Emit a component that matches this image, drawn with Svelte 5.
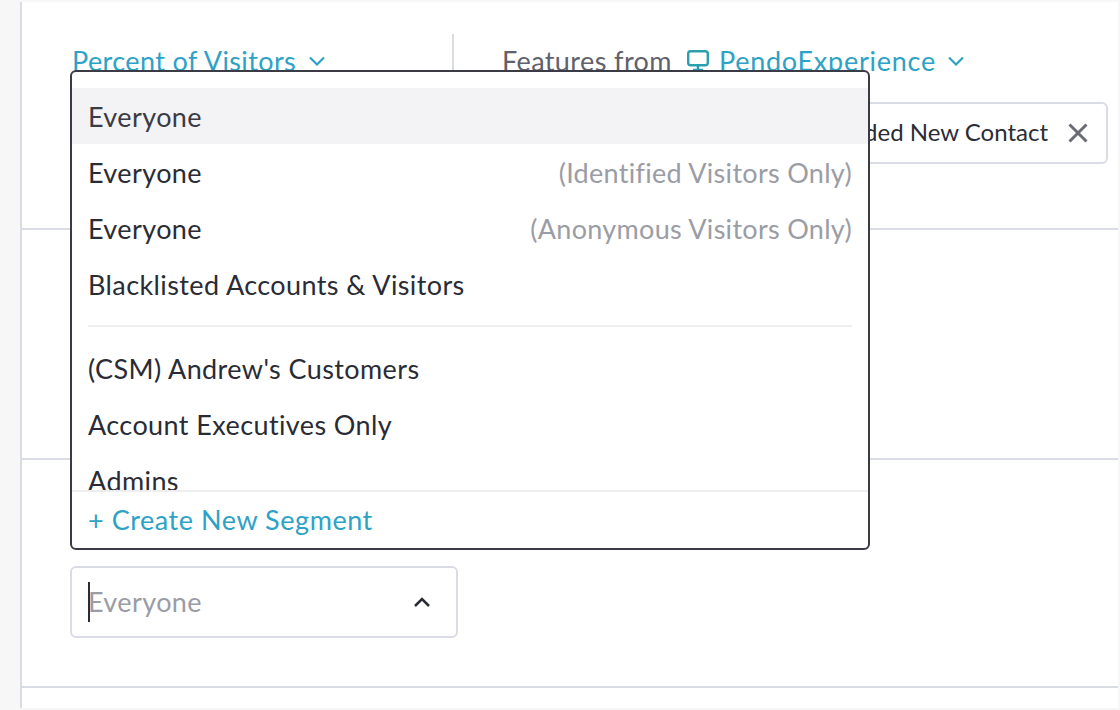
<script>
    const topItems = [
        { label: "Everyone", note: "", active: true },
        { label: "Everyone", note: "(Identified Visitors Only)" },
        { label: "Everyone", note: "(Anonymous Visitors Only)" },
        { label: "Blacklisted Accounts & Visitors", note: "" },
    ];
    const segments = ["(CSM) Andrew's Customers", "Account Executives Only", "Admins"];
</script>

<div class="page">
    <div class="card">
        <section class="row first">
            <div class="metric">
                <span class="link">Percent of Visitors</span>
                <svg class="chev" width="16" height="10" viewBox="0 0 16 10"><path d="M1 1.5l7 7 7-7" /></svg>
            </div>
            <div class="features">
                <div class="source">
                    <span class="muted">Features from</span>
                    <svg class="monitor" width="22" height="22" viewBox="0 0 22 22">
                        <rect x="1.2" y="1.2" width="19.6" height="14" rx="2.5" />
                        <path d="M11 15.5v4M6 20h10" />
                    </svg>
                    <span class="link app">PendoExperience</span>
                    <svg class="chev" width="16" height="10" viewBox="0 0 16 10"><path d="M1 1.5l7 7 7-7" /></svg>
                </div>
                <div class="chip">
                    <span>Added New Contact</span>
                    <svg class="close" width="20" height="20" viewBox="0 0 20 20"><path d="M1.5 1.5l17 17M18.5 1.5l-17 17" /></svg>
                </div>
            </div>
        </section>
        <section class="row second"></section>
        <section class="row third">
            <div class="select">
                <span class="caret"></span>
                <span class="placeholder">Everyone</span>
                <svg class="chev-up" width="16" height="10" viewBox="0 0 16 10"><path d="M1 9l7-7 7 7" /></svg>
            </div>
        </section>
    </div>

    <div class="dropdown">
        <div class="list">
            {#each topItems as item}
                <div class="item" class:active={item.active}>
                    <span>{item.label}</span>
                    {#if item.note}<span class="note">{item.note}</span>{/if}
                </div>
            {/each}
            <div class="sep"></div>
            {#each segments as name}
                <div class="item"><span>{name}</span></div>
            {/each}
        </div>
        <div class="create">+ Create New Segment</div>
    </div>
</div>

<style>
    :global(body) {
        margin: 0;
        background: #f7f7f8;
    }

    .page {
        position: relative;
        width: 1120px;
        height: 710px;
        box-sizing: border-box;
        padding: 2px 2px 2px 20px;
        font-family: Lato, "Open Sans", sans-serif;
        font-size: 27px;
        letter-spacing: 0.4px;
        font-variant-ligatures: none;
        color: #2a2c35;
        overflow: hidden;
    }

    .card {
        height: 100%;
        box-sizing: border-box;
        background: #fff;
        border-left: 2px solid #dadce5;
        overflow: hidden;
    }

    .row {
        box-sizing: border-box;
        border-bottom: 2px solid #dadce5;
    }

    .first {
        height: 228px;
        display: flex;
        padding: 32px 10px 0 48px;
    }

    .second {
        height: 230px;
    }

    .third {
        height: 228px;
        padding: 106px 0 0 48px;
    }

    .metric {
        width: 384px;
        height: 66px;
        box-sizing: border-box;
        display: flex;
        align-items: flex-start;
        gap: 13px;
        padding: 8px 0 0 2px;
        border-right: 2px solid #dadce5;
        flex: none;
    }

    .metric .chev {
        margin-top: 14px;
    }

    .features {
        flex: 1;
        padding: 8px 0 0 48px;
    }

    .source {
        display: flex;
        align-items: flex-start;
        height: 60px;
    }

    .source .monitor {
        margin: 8px 10px 0 15px;
    }

    .source .chev {
        margin: 14px 0 0 12px;
    }

    .link {
        color: #2ea2c6;
        line-height: 38px;
    }

    .app {
        letter-spacing: 0.75px;
    }

    .muted {
        color: #5f616c;
        line-height: 38px;
    }

    svg {
        flex: none;
        fill: none;
    }

    .chev path {
        stroke: #2ea2c6;
        stroke-width: 2.2;
    }

    .monitor rect,
    .monitor path {
        stroke: #2a9fae;
        stroke-width: 2.4;
    }

    .chip {
        height: 62px;
        box-sizing: border-box;
        border: 2px solid #dadce5;
        border-radius: 6px;
        display: flex;
        justify-content: flex-end;
        align-items: center;
        gap: 20px;
        padding-right: 18px;
        font-size: 24px;
        letter-spacing: 0;
    }

    .chip span {
        padding-bottom: 3px;
    }

    .close path {
        stroke: #696b75;
        stroke-width: 3;
    }

    .select {
        width: 388px;
        height: 72px;
        box-sizing: border-box;
        border: 2px solid #dadce5;
        border-radius: 6px;
        display: flex;
        align-items: center;
        padding: 0 26px 0 16px;
        position: relative;
    }

    .caret {
        position: absolute;
        left: 16px;
        top: 14px;
        width: 2px;
        height: 40px;
        background: #2a2c35;
    }

    .placeholder {
        flex: 1;
        color: #9a9ca6;
        padding-bottom: 2px;
    }

    .chev-up path {
        stroke: #2a2c35;
        stroke-width: 2.5;
    }

    .dropdown {
        position: absolute;
        left: 70px;
        top: 70px;
        width: 800px;
        height: 480px;
        box-sizing: border-box;
        display: flex;
        flex-direction: column;
        background: #fff;
        border: 2px solid #3a3b45;
        border-radius: 6px;
        overflow: hidden;
    }

    .list {
        height: 418px;
        box-sizing: border-box;
        padding-top: 16px;
        overflow: hidden;
        flex: none;
    }

    .item {
        height: 56px;
        display: flex;
        justify-content: space-between;
        align-items: center;
        padding: 0 16px;
    }

    .item.active {
        background: #f3f3f5;
        color: #3a3b45;
    }

    .note {
        color: #9a9ca6;
        letter-spacing: 0.3px;
    }

    .sep {
        height: 2px;
        margin: 13px 16px 13px;
        background: #eeeef1;
    }

    .create {
        flex: 1;
        border-top: 2px solid #eeeef1;
        display: flex;
        align-items: center;
        padding: 0 16px 1px;
        color: #2ea2c6;
        letter-spacing: 0.55px;
    }
</style>
